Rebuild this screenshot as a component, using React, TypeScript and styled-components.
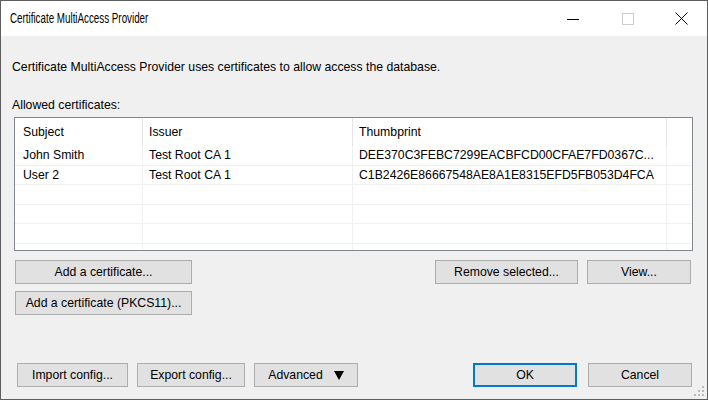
import React from "react";
import styled, { createGlobalStyle } from "styled-components";

const Global = createGlobalStyle`
  html, body { margin: 0; padding: 0; background: #3c3c3c; }
  * { box-sizing: border-box; }
  body { font-family: "Liberation Sans", Arial, sans-serif; font-size: 12.25px; color: #000; }
`;

const Window = styled.div`
  position: relative;
  width: 708px;
  height: 400px;
  border: 1px solid #5e5e5e;
  background: #f0f0f0;
  display: flex;
  flex-direction: column;
  overflow: hidden;
`;

const TitleBar = styled.div`
  height: 35px;
  flex: 0 0 35px;
  background: #fff;
  display: flex;
  align-items: center;
`;

const TitleText = styled.div`
  flex: 1;
  padding-left: 9px;
  padding-bottom: 1px;
  white-space: nowrap;
`;

const TitleLabel = styled.span`
  display: inline-block;
  font-size: 14px;
  line-height: 16px;
  transform: scaleX(0.7);
  transform-origin: left center;
`;

const ControlButton = styled.div<{ $w: number }>`
  width: ${(p) => p.$w}px;
  height: 35px;
  display: flex;
  align-items: center;
  justify-content: center;
`;

const Body = styled.div`
  flex: 1;
  display: flex;
  flex-direction: column;
  padding: 24px 14px 12px 13px;
`;

const Text = styled.div<{ $mt?: number }>`
  line-height: 14px;
  height: 14px;
  margin-left: -2px;
  margin-top: ${(p) => p.$mt ?? 0}px;
  white-space: nowrap;
`;

const ListBox = styled.div`
  margin-top: 5px;
  height: 134px;
  border: 1px solid #828790;
  background: #fff;
  overflow: hidden;
  display: flex;
  flex-direction: column;
`;

const HeaderRow = styled.div`
  display: flex;
  height: 28px;
  flex: 0 0 28px;
`;

const Row = styled.div`
  display: flex;
  height: 19.6px;
  flex: 0 0 19.6px;
  border-bottom: 1px solid #f0f0f0;
`;

const Cell = styled.div<{ $w?: number; $pl: number; $header?: boolean }>`
  ${(p) => (p.$w ? `width: ${p.$w}px; flex: 0 0 ${p.$w}px;` : "flex: 1;")}
  padding-left: ${(p) => p.$pl}px;
  border-right: ${(p) => (p.$w ? `1px solid ${p.$header ? "#e5e5e5" : "#f0f0f0"}` : "none")};
  display: flex;
  align-items: center;
  white-space: nowrap;
  overflow: hidden;
  line-height: 14px;
`;

const ButtonRow = styled.div<{ $mt: number; $pl?: number; $pr?: number }>`
  display: flex;
  align-items: center;
  margin-top: ${(p) => p.$mt}px;
  padding-left: ${(p) => p.$pl ?? 0}px;
  padding-right: ${(p) => p.$pr ?? 0}px;
`;

const BottomRow = styled(ButtonRow)`
  margin-top: auto;
`;

const Spacer = styled.div`
  flex: 1;
`;

const Button = styled.div<{ $w: number; $ml?: number; $default?: boolean }>`
  width: ${(p) => p.$w}px;
  height: 24px;
  margin-left: ${(p) => p.$ml ?? 0}px;
  background: #e1e1e1;
  border: ${(p) => (p.$default ? "2px solid #0078d7" : "1px solid #adadad")};
  display: flex;
  align-items: center;
  justify-content: center;
  gap: 11px;
  line-height: 14px;
  white-space: nowrap;
`;

const Grip = styled.svg`
  position: absolute;
  right: 3px;
  bottom: 3px;
`;

const columns = [
  { w: 128, pl: 8 },
  { w: 210, pl: 6 },
  { w: 314, pl: 6 },
  { w: 0, pl: 6 },
];

const headers = ["Subject", "Issuer", "Thumbprint", ""];

const rows: string[][] = [
  ["John Smith", "Test Root CA 1", "DEE370C3FEBC7299EACBFCD00CFAE7FD0367C...", ""],
  ["User 2", "Test Root CA 1", "C1B2426E86667548AE8A1E8315EFD5FB053D4FCA", ""],
  ["", "", "", ""],
  ["", "", "", ""],
  ["", "", "", ""],
  ["", "", "", ""],
];

export default function App() {
  return (
    <>
      <Global />
      <Window>
        <TitleBar>
          <TitleText>
            <TitleLabel>Certificate MultiAccess Provider</TitleLabel>
          </TitleText>
          <ControlButton $w={55}>
            <svg width="12" height="12" viewBox="0 0 12 12">
              <line x1="0" y1="6.5" x2="12" y2="6.5" stroke="#000" strokeWidth="1" />
            </svg>
          </ControlButton>
          <ControlButton $w={55}>
            <svg width="12" height="12" viewBox="0 0 12 12">
              <rect x="0.5" y="0.5" width="11" height="11" fill="none" stroke="#cccccc" strokeWidth="1" />
            </svg>
          </ControlButton>
          <ControlButton $w={52}>
            <svg width="13" height="13" viewBox="0 0 13 13">
              <path d="M0.5 0.5 L12.5 12.5 M12.5 0.5 L0.5 12.5" stroke="#000" strokeWidth="1" />
            </svg>
          </ControlButton>
        </TitleBar>
        <Body>
          <Text>Certificate MultiAccess Provider uses certificates to allow access the database.</Text>
          <Text $mt={24}>Allowed certificates:</Text>
          <ListBox>
            <HeaderRow>
              {headers.map((h, i) => (
                <Cell key={i} $w={columns[i].w || undefined} $pl={columns[i].pl} $header>
                  {h}
                </Cell>
              ))}
            </HeaderRow>
            {rows.map((r, ri) => (
              <Row key={ri}>
                {r.map((c, i) => (
                  <Cell key={i} $w={columns[i].w || undefined} $pl={columns[i].pl}>
                    {c}
                  </Cell>
                ))}
              </Row>
            ))}
          </ListBox>
          <ButtonRow $mt={9} $pl={1} $pr={2}>
            <Button $w={177}>Add a certificate...</Button>
            <Spacer />
            <Button $w={143}>Remove selected...</Button>
            <Button $w={104} $ml={9}>View...</Button>
          </ButtonRow>
          <ButtonRow $mt={7} $pl={1}>
            <Button $w={177}>Add a certificate (PKCS11)...</Button>
          </ButtonRow>
          <BottomRow $mt={0} $pl={3} $pr={1}>
            <Button $w={111}>Import config...</Button>
            <Button $w={108} $ml={9}>Export config...</Button>
            <Button $w={104} $ml={9}>
              <span>Advanced</span>
              <svg width="10" height="9" viewBox="0 0 10 9">
                <polygon points="0,0 10,0 5,9" fill="#000" />
              </svg>
            </Button>
            <Spacer />
            <Button $w={104} $default>OK</Button>
            <Button $w={104} $ml={11}>Cancel</Button>
          </BottomRow>
        </Body>
        <Grip width="10" height="10" viewBox="0 0 10 10">
          <rect x="8" y="0" width="2" height="2" fill="#b8b8b8" />
          <rect x="4" y="4" width="2" height="2" fill="#b8b8b8" />
          <rect x="8" y="4" width="2" height="2" fill="#b8b8b8" />
          <rect x="0" y="8" width="2" height="2" fill="#b8b8b8" />
          <rect x="4" y="8" width="2" height="2" fill="#b8b8b8" />
          <rect x="8" y="8" width="2" height="2" fill="#b8b8b8" />
        </Grip>
      </Window>
    </>
  );
}
